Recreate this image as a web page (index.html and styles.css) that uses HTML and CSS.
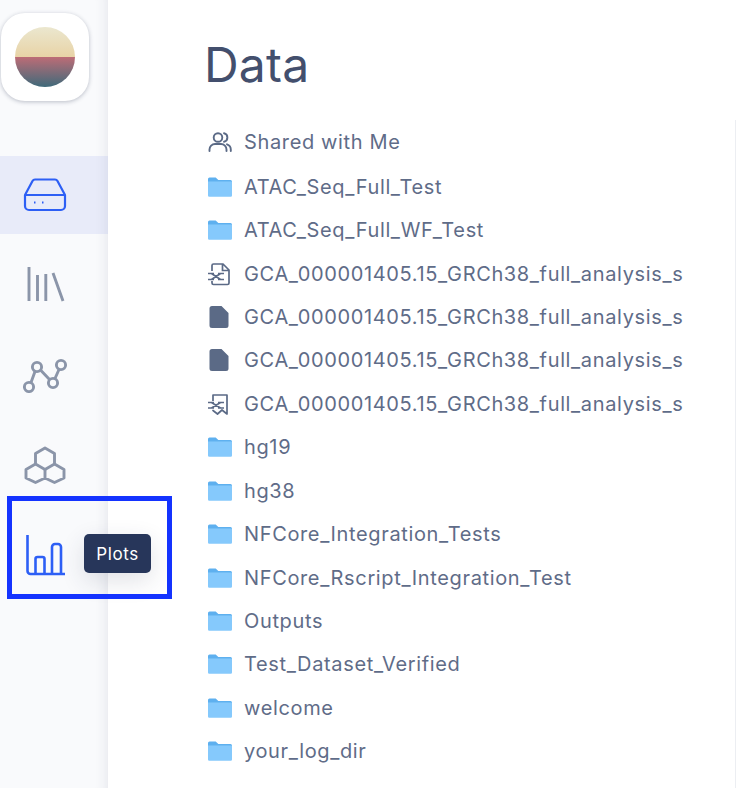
FILE: index.html
```html
<!DOCTYPE html>
<html lang="en">
<head>
<meta charset="utf-8">
<title>Data</title>
<link rel="stylesheet" href="styles.css">
</head>
<body>
<svg class="defs" width="0" height="0" aria-hidden="true">
  <defs>
    <linearGradient id="sky" x1="0" y1="0" x2="0" y2="1"><stop offset="0" stop-color="#ebe7cf"/><stop offset="1" stop-color="#e8d3a6"/></linearGradient>
    <linearGradient id="sea" x1="0" y1="0" x2="0" y2="1"><stop offset="0" stop-color="#bd6c76"/><stop offset="1" stop-color="#3f6a7a"/></linearGradient>
    <symbol id="folder" viewBox="0 0 24 20">
      <path d="M0 2a1.500 1.500 0 0 1 1.500-1.500h6.200l2.600 2.500H22.500A1.500 1.500 0 0 1 24 4.500V5H0z" fill="#5eb0ef"/>
      <path d="M0 4.500h24v14a1.200 1.200 0 0 1-1.200 1.200H1.200A1.200 1.200 0 0 1 0 18.500z" fill="#85c9fc"/>
    </symbol>
    <symbol id="file" viewBox="0 0 20 24">
      <path d="M3 1h9.500L19.500 8V20.500a2.500 2.500 0 0 1-2.500 2.500h-14A2.500 2.500 0 0 1 .5 20.500V3.500A2.500 2.500 0 0 1 3 1z" fill="#5b6a86"/>
    </symbol>
    <symbol id="filex" viewBox="0 0 24 24">
      <path d="M5 9V3.500A1.500 1.500 0 0 1 6.500 2H16l6 6v13a1.500 1.500 0 0 1-1.500 1.500H6.500A1.500 1.500 0 0 1 5 21v-2M15.500 2v6.500H22" fill="none" stroke="#5b6a86" stroke-width="1.700"/>
      <path d="M1 11.500h6M11 11.500h6M1 17.500h6M11 17.500h6M4.500 11.500l9 6M13.500 11.500l-9 6" fill="none" stroke="#5b6a86" stroke-width="1.700"/>
    </symbol>
    <symbol id="filer" viewBox="0 0 24 24">
      <path d="M6 9V3h14v19l-5-4-4.500 4-4.500-3.500V19" fill="none" stroke="#5b6a86" stroke-width="1.700" stroke-linejoin="round"/>
      <path d="M1 10.500h6M11 10.500h6M1 16h6M11 16h6M4.500 10.500l9 5.500M13.500 10.500l-9 5.500" fill="none" stroke="#5b6a86" stroke-width="1.700"/>
    </symbol>
  </defs>
</svg>
<div class="app">
  <nav class="sidebar">
    <div class="logo">
      <svg width="60" height="60" viewBox="0 0 60 60"><path d="M0 30a30 30 0 0 1 60 0z" fill="url(#sky)"/><path d="M0 30h60a30 30 0 0 1-60 0z" fill="url(#sea)"/></svg>
    </div>
    <a class="nav-item active">
      <svg width="44" height="36" viewBox="0 0 44 36" fill="none" stroke="#2d5ff5" stroke-width="2.200"><path d="M2 18 9.500 4A3 3 0 0 1 12 2.500h20A3 3 0 0 1 34.500 4L42 18v11a4 4 0 0 1-4 4H6a4 4 0 0 1-4-4z" stroke-linejoin="round"/><path d="M2 18h40"/><path d="M11 25.500h1.500M19 25.500h1.500"/></svg>
    </a>
    <a class="nav-item">
      <svg width="44" height="36" viewBox="0 0 44 36" fill="none" stroke="#8b95a9" stroke-width="2.900"><path d="M6 0v34M14.500 8v26M22.800 7v27M30 6l10 28"/></svg>
    </a>
    <a class="nav-item">
      <svg width="46" height="36" viewBox="0 0 46 36" fill="none" stroke="#8b95a9" stroke-width="2.900"><circle cx="6" cy="30" r="4.600"/><circle cx="14" cy="10" r="4.600"/><circle cx="30" cy="26" r="4.600"/><circle cx="38" cy="8" r="4.600"/><path d="M8 25.500 12 14.500M17.500 13l9 9.500M32 21.500 36 12.500"/></svg>
    </a>
    <a class="nav-item">
      <svg width="44" height="38" viewBox="0 0 44 38" fill="none" stroke="#8b95a9" stroke-width="2.900" stroke-linejoin="round"><path d="M22 2l9.500 5.500v10.500L22 23.500 12.500 18V7.500z"/><path d="M12.500 18 3 23.500V32l9.500 4.500L22 32V23.500M22 32l9.500 4.500L41 32V23.500L31.500 18"/></svg>
    </a>
    <a class="nav-item">
      <svg class="plots-icon" width="40" height="42" viewBox="0 0 40 42" fill="none" stroke="#2d5ff5" stroke-width="2.600" stroke-linejoin="round"><path d="M1.500 1v36a3 3 0 0 0 3 3h34.500"/><path d="M9.500 40V25a2 2 0 0 1 2-2h5a2 2 0 0 1 2 2v15M26 40V13a3 3 0 0 1 3-3h3a3 3 0 0 1 3 3v27"/></svg>
    </a>
  </nav>
  <main class="content">
    <h1 class="title">Data</h1>
    <ul class="list">
      <li class="row first"><span class="ico"><svg width="24" height="24" viewBox="0 0 24 24" fill="none" stroke="#5b6a86" stroke-width="1.900" stroke-linecap="round"><circle cx="10" cy="7.500" r="4.300"/><path d="M1.500 21v-1.500a5.500 5.500 0 0 1 5.500-5.500h6a5.500 5.500 0 0 1 5.500 5.500V21M16 3.300a4.300 4.300 0 0 1 0 8.400M19 14.300a5.500 5.500 0 0 1 3.800 5.200V21"/></svg></span>Shared with Me</li>
      <li class="row"><span class="ico"><svg class="fd"><use href="#folder"/></svg></span>ATAC_Seq_Full_Test</li>
      <li class="row"><span class="ico"><svg class="fd"><use href="#folder"/></svg></span>ATAC_Seq_Full_WF_Test</li>
      <li class="row"><span class="ico"><svg class="fi"><use href="#filex"/></svg></span>GCA_000001405.15_GRCh38_full_analysis_s</li>
      <li class="row"><span class="ico"><svg class="fi"><use href="#file"/></svg></span>GCA_000001405.15_GRCh38_full_analysis_s</li>
      <li class="row"><span class="ico"><svg class="fi"><use href="#file"/></svg></span>GCA_000001405.15_GRCh38_full_analysis_s</li>
      <li class="row"><span class="ico"><svg class="fi"><use href="#filer"/></svg></span>GCA_000001405.15_GRCh38_full_analysis_s</li>
      <li class="row"><span class="ico"><svg class="fd"><use href="#folder"/></svg></span>hg19</li>
      <li class="row"><span class="ico"><svg class="fd"><use href="#folder"/></svg></span>hg38</li>
      <li class="row"><span class="ico"><svg class="fd"><use href="#folder"/></svg></span>NFCore_Integration_Tests</li>
      <li class="row"><span class="ico"><svg class="fd"><use href="#folder"/></svg></span>NFCore_Rscript_Integration_Test</li>
      <li class="row"><span class="ico"><svg class="fd"><use href="#folder"/></svg></span>Outputs</li>
      <li class="row"><span class="ico"><svg class="fd"><use href="#folder"/></svg></span>Test_Dataset_Verified</li>
      <li class="row"><span class="ico"><svg class="fd"><use href="#folder"/></svg></span>welcome</li>
      <li class="row"><span class="ico"><svg class="fd"><use href="#folder"/></svg></span>your_log_dir</li>
    </ul>
  </main>
  <div class="tooltip">Plots</div>
  <div class="highlight"></div>
</div>
</body>
</html>
```
FILE: styles.css
```css
* { box-sizing: border-box; }
html, body { margin: 0; height: 100%; overflow: hidden; background: #fff; }
body { font-family: Inter, "Liberation Sans", sans-serif; }
.defs { position: absolute; }
.app { display: flex; height: 788px; position: relative; }
.sidebar {
  width: 108px;
  flex: none;
  background: #f9fafc;
  box-shadow: inset -14px 0 14px -14px rgba(40, 50, 80, 0.12);
  padding-top: 13px;
  display: flex;
  flex-direction: column;
}
.logo {
  width: 88px;
  height: 88px;
  margin: 0 0 55px 1px;
  border-radius: 24px;
  background: #fff;
  box-shadow: 0 1px 4px rgba(40, 50, 80, 0.3);
  display: flex;
  align-items: center;
  justify-content: center;
}
.nav-item {
  height: 78px;
  display: flex;
  align-items: center;
  padding-left: 23px;
  margin-bottom: 12px;
}
.nav-item.active { background: #e8ebf9; box-shadow: inset -14px 0 14px -14px rgba(40, 50, 80, 0.1); }
.plots-icon { margin-left: 3px; }
.content { flex: 1; padding: 36px 0 0 97px; position: relative; }
.content::after {
  content: "";
  position: absolute;
  right: 0;
  top: 120px;
  bottom: 0;
  width: 1px;
  background: #eceef2;
}
.title {
  margin: 0 0 26px -1px;
  font-size: 48px;
  line-height: 58px;
  font-weight: 400;
  letter-spacing: 0.2px;
  color: #434f6d;
}
.list { list-style: none; margin: 0; padding: 0; }
.row {
  height: 43.43px;
  display: flex;
  align-items: center;
  font-size: 20px;
  letter-spacing: 0.64px;
  color: #5f6c88;
  white-space: nowrap;
}
.row.first { height: 45px; padding-bottom: 2px; }
.ico { width: 39px; flex: none; display: flex; align-items: center; padding-left: 3px; }
.fd { width: 24px; height: 20px; }
.fi { width: 24px; height: 24px; margin-left: -1px; }
.tooltip {
  position: absolute;
  left: 84px;
  top: 534px;
  width: 67px;
  height: 39px;
  background: #27365a;
  color: #fff;
  border-radius: 5px;
  font-size: 17px;
  letter-spacing: 0.6px;
  display: flex;
  align-items: center;
  justify-content: center;
  box-shadow: 0 8px 24px rgba(40, 50, 80, 0.14);
}
.highlight {
  position: absolute;
  left: 7px;
  top: 496px;
  width: 165px;
  height: 103px;
  border: 5px solid #1433ff;
}
```
